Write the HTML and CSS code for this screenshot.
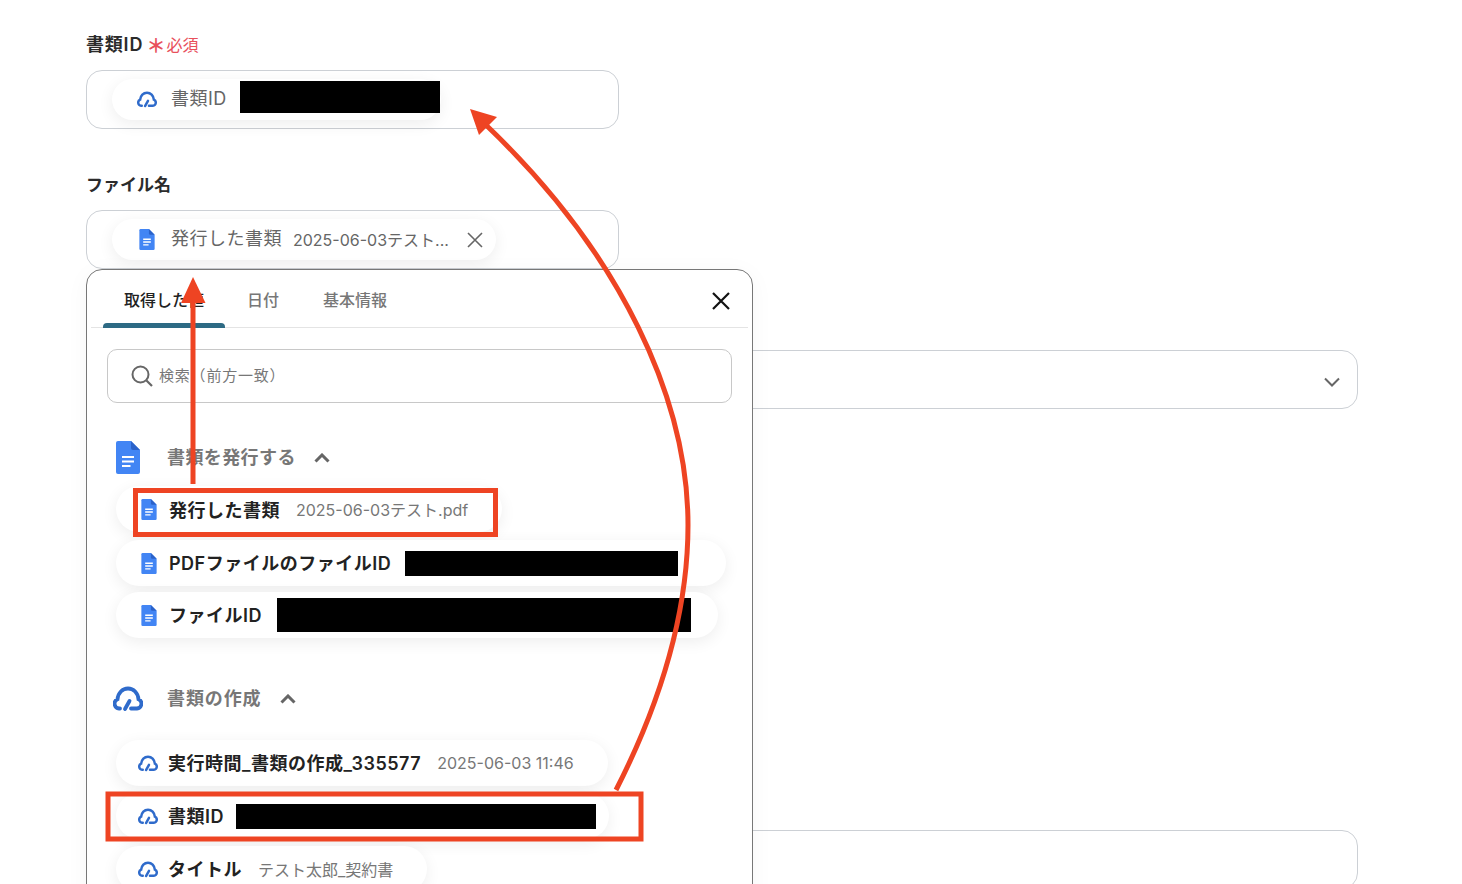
FILE: index.html
```html
<!DOCTYPE html>
<html lang="ja">
  <head>
    <meta charset="UTF-8" />
    <title>書類ID</title>
    <link rel="stylesheet" href="styles.css">
  </head>
  <body>
    <svg class="defs" width="0" height="0">
      <symbol id="doc" viewBox="0 0 24 33">
        <path d="M2 0H15L24 9V31a2 2 0 0 1-2 2H2a2 2 0 0 1-2-2V2a2 2 0 0 1 2-2Z" fill="#4285f4" />
        <path d="M15 0L24 9H17a2 2 0 0 1-2-2Z" fill="#2b62c9" />
        <path d="M6 16H18M6 20.500H18M6 25H14.500" stroke="#fff" stroke-width="2.200" fill="none" />
      </symbol>
      <symbol id="cloud" viewBox="0 0 30 26">
        <path d="M7 22.500H6A4.800 4.800 0 0 1 4.500 13.300C5 7 9.500 2.500 15 2.500S25 7 25.500 13.300A4.800 4.800 0 0 1 24 22.500H18" stroke="#2f6bcb" stroke-width="3.800" stroke-linecap="round" fill="none" />
        <path d="M12 23L16.500 15" stroke="#2f6bcb" stroke-width="3.800" stroke-linecap="round" fill="none" />
      </symbol>
    </svg>

    <div class="form">
      <div class="field">
        <div class="label">書類ID <span class="req"><span class="star">＊</span>必須</span></div>
        <div class="box short">
          <div class="chip">
            <svg class="ico-cloud"><use href="#cloud" /></svg>
            <span class="chip-name">書類ID</span>
            <span class="redact r-top"></span>
          </div>
        </div>
      </div>

      <div class="field f2">
        <div class="label">ファイル名</div>
        <div class="box short">
          <div class="chip">
            <svg class="ico-doc"><use href="#doc" /></svg>
            <span class="chip-name">発行した書類</span>
            <span class="chip-val">2025-06-03テスト...</span>
            <svg class="chip-x" viewBox="0 0 16 16"><path d="M1 1L15 15M15 1L1 15" stroke="#666" stroke-width="1.600" fill="none" /></svg>
          </div>
        </div>
      </div>

      <div class="box wide f3">
        <svg class="select-arrow" viewBox="0 0 16 10"><path d="M1 1.500L8 8.500L15 1.500" stroke="#666" stroke-width="2" fill="none" /></svg>
      </div>
      <div class="box wide f4"></div>
    </div>

    <div class="panel">
      <div class="tabs">
        <div class="tab active">取得した値</div>
        <div class="tab">日付</div>
        <div class="tab">基本情報</div>
        <svg class="close" viewBox="0 0 20 20"><path d="M2 2L18 18M18 2L2 18" stroke="#111" stroke-width="2.200" fill="none" /></svg>
      </div>

      <div class="search">
        <svg class="search-ico" viewBox="0 0 22 22"><circle cx="9.500" cy="9.500" r="8" stroke="#666" stroke-width="2" fill="none" /><path d="M15.500 15.500L21 21" stroke="#666" stroke-width="2.200" fill="none" /></svg>
        <span class="search-text">検索（前方一致）</span>
      </div>

      <div class="section s1">
        <svg class="sec-doc"><use href="#doc" /></svg>
        <span class="sec-title">書類を発行する</span>
        <svg class="sec-arrow" viewBox="0 0 16 10"><path d="M1.500 8.500L8 2L14.500 8.500" stroke="#666" stroke-width="3" fill="none" /></svg>
      </div>
      <div class="list">
        <div class="pill">
          <svg class="pill-doc"><use href="#doc" /></svg>
          <span class="pill-name">発行した書類</span>
          <span class="pill-val">2025-06-03テスト.pdf</span>
        </div>
        <div class="pill p-pdf">
          <svg class="pill-doc"><use href="#doc" /></svg>
          <span class="pill-name">PDFファイルのファイルID</span>
          <span class="redact r-pdf"></span>
        </div>
        <div class="pill p-file">
          <svg class="pill-doc"><use href="#doc" /></svg>
          <span class="pill-name">ファイルID</span>
          <span class="redact r-file"></span>
        </div>
      </div>

      <div class="section s2">
        <svg class="sec-cloud"><use href="#cloud" /></svg>
        <span class="sec-title">書類の作成</span>
        <svg class="sec-arrow" viewBox="0 0 16 10"><path d="M1.500 8.500L8 2L14.500 8.500" stroke="#666" stroke-width="3" fill="none" /></svg>
      </div>
      <div class="list l2">
        <div class="pill">
          <svg class="pill-cloud"><use href="#cloud" /></svg>
          <span class="pill-name">実行時間_書類の作成_335577</span>
          <span class="pill-val">2025-06-03 11:46</span>
        </div>
        <div class="pill">
          <svg class="pill-cloud"><use href="#cloud" /></svg>
          <span class="pill-name">書類ID</span>
          <span class="redact r-doc"></span>
        </div>
        <div class="pill">
          <svg class="pill-cloud"><use href="#cloud" /></svg>
          <span class="pill-name">タイトル</span>
          <span class="pill-val">テスト太郎_契約書</span>
        </div>
      </div>
    </div>

    <!-- red annotations drawn on top of the screenshot -->
    <svg class="notes" viewBox="0 0 1462 884">
      <rect x="135.500" y="490.500" width="360" height="44" />
      <rect x="108" y="794" width="533" height="45" />
      <path d="M193 484V298" />
      <path d="M616 790C668 688 688 600 688 525C688 400 622 255 486 125" />
      <path class="head" d="M193 277L205.500 303H181Z" />
      <path class="head" d="M470 109L497 117L479 135Z" />
    </svg>
  </body>
</html>
```

FILE: styles.css
```css
* {
  box-sizing: border-box;
}

html,
body {
  height: 884px;
  overflow: hidden;
}

body {
  margin: 0;
  background: #fff;
  position: relative;
  font-family: Inter, "Noto Sans CJK JP", sans-serif;
  color: #222;
}

.defs {
  position: absolute;
}

.form {
  padding: 34px 104px 0 86px;
}

.label {
  height: 22px;
  line-height: 22px;
  font-size: 18px;
  font-weight: 600;
  letter-spacing: 0.8px;
  color: #2b2b2b;
  margin-bottom: 14px;
}

.req {
  color: #e8505b;
  font-size: 16px;
  font-weight: 400;
  letter-spacing: 0;
}

.star {
  display: inline-block;
  width: 17px;
  margin-left: 1px;
  font-size: 19px;
  font-weight: 700;
  line-height: 16px;
  position: relative;
  top: 2px;
  left: -3px;
}

.f2 {
  margin-top: 45px;
}

.f2 .label {
  font-size: 17px;
  letter-spacing: 0;
}

.box {
  display: flex;
  align-items: flex-start;
  border: 1px solid #ccd0d5;
  border-radius: 16px;
  height: 59px;
  padding: 8px 25px;
  background: #fff;
}

.short {
  width: 533px;
}

.wide {
  width: 1272px;
  position: relative;
}

.f3 {
  margin-top: 81px;
}

.f4 {
  margin-top: 421px;
}

.select-arrow {
  position: absolute;
  right: 17px;
  top: 26px;
  width: 16px;
  height: 10px;
}

.chip {
  display: flex;
  align-items: center;
  height: 41px;
  padding-left: 25px;
  padding-right: 13px;
  border-radius: 21px;
  background: #fff;
  box-shadow: 0 4px 16px rgba(0, 0, 0, 0.07);
}

.ico-cloud {
  width: 20px;
  height: 17px;
  margin-right: 14px;
}

.ico-doc {
  width: 16px;
  height: 21px;
  margin: 0 16px 0 2px;
}

.chip-name {
  font-size: 18px;
  color: #666;
  letter-spacing: 0.5px;
  padding-bottom: 6px;
}

.chip-val {
  font-size: 16px;
  color: #666;
  margin-left: 11px;
  padding-bottom: 2px;
}

.chip-x {
  width: 16px;
  height: 16px;
  margin-left: 18px;
}

.redact {
  background: #000;
  display: block;
  flex: none;
}

.r-top {
  width: 200px;
  height: 32px;
  margin-left: 13px;
  margin-right: -12px;
  margin-bottom: 5px;
}

.panel {
  position: absolute;
  left: 86px;
  top: 269px;
  width: 667px;
  height: 640px;
  background: #fff;
  border: 1px solid #777;
  border-radius: 16px;
  box-shadow: 0 4px 24px rgba(0, 0, 0, 0.04);
}

.tabs {
  display: flex;
  height: 58px;
  margin: 0 4px;
  padding-left: 12px;
  border-bottom: 1px solid #e4e4e4;
  position: relative;
}

.tab {
  font-size: 16px;
  font-weight: 500;
  color: #777;
  line-height: 60px;
  padding: 0 22px;
}

.tab.active {
  color: #222;
  width: 122px;
  padding: 0 0 0 21px;
  position: relative;
  white-space: nowrap;
}

.tab.active::after {
  content: "";
  position: absolute;
  left: 0;
  right: 0;
  bottom: -1px;
  height: 5px;
  background: #2d6a84;
  border-radius: 4px 4px 0 0;
}

.close {
  position: absolute;
  right: 17px;
  top: 21px;
  width: 20px;
  height: 20px;
}

.search {
  display: flex;
  align-items: center;
  gap: 6px;
  height: 54px;
  margin: 21px 20px 0;
  padding-left: 23px;
  border: 1px solid #c8c8c8;
  border-radius: 10px;
  font-size: 15px;
  color: #777;
}

.search-ico {
  width: 22px;
  height: 22px;
}

.search-text {
  letter-spacing: 0.8px;
  padding-bottom: 4px;
}

.section {
  display: flex;
  align-items: center;
  font-size: 18px;
  font-weight: 600;
  letter-spacing: 0.4px;
  color: #777;
}

.sec-title {
  padding-bottom: 4px;
}

.s1 {
  margin: 38px 0 0 29px;
  height: 33px;
}

.s2 {
  margin: 48px 0 0 26px;
  height: 26px;
  letter-spacing: 0.9px;
}

.sec-doc {
  width: 24px;
  height: 33px;
  margin-right: 27px;
}

.sec-cloud {
  width: 30px;
  height: 26px;
  margin-right: 24px;
}

.sec-arrow {
  width: 16px;
  height: 10px;
  margin-left: 18px;
}

.list {
  display: flex;
  flex-direction: column;
  align-items: flex-start;
  gap: 6px;
  margin: 12px 0 0 29px;
}

.l2 {
  gap: 7px;
  margin-top: 28px;
}

.pill {
  display: flex;
  align-items: center;
  height: 46px;
  padding: 0 34px 0 22px;
  border-radius: 23px;
  background: #fff;
  box-shadow: 0 4px 16px rgba(0, 0, 0, 0.07);
  white-space: nowrap;
}

.pill-doc {
  width: 16px;
  height: 21px;
  margin: 0 12px 0 3px;
}

.pill-cloud {
  width: 20px;
  height: 17px;
  margin-right: 10px;
}

.pill-name {
  font-size: 18px;
  font-weight: 600;
  letter-spacing: 0.5px;
  color: #222;
}

.p-pdf .pill-name,
.p-file .pill-name,
.l2 .pill-name {
  padding-bottom: 2px;
}

.pill-val {
  font-size: 16px;
  color: #777;
  margin-left: 16px;
}

.p-pdf {
  margin-top: 2px;
  padding-right: 48px;
}

.p-file {
  padding-right: 27px;
}

.r-pdf {
  width: 273px;
  height: 25px;
  margin-left: 14px;
}

.r-file {
  width: 414px;
  height: 34px;
  margin-left: 15px;
}

.r-doc {
  width: 360px;
  height: 25px;
  margin-left: 12px;
  margin-right: -21px;
}

.notes {
  position: absolute;
  left: 0;
  top: 0;
  width: 1462px;
  height: 884px;
  fill: none;
  stroke: #ee4423;
  stroke-width: 5;
}

.notes .head {
  fill: #ee4423;
  stroke: none;
}
```
